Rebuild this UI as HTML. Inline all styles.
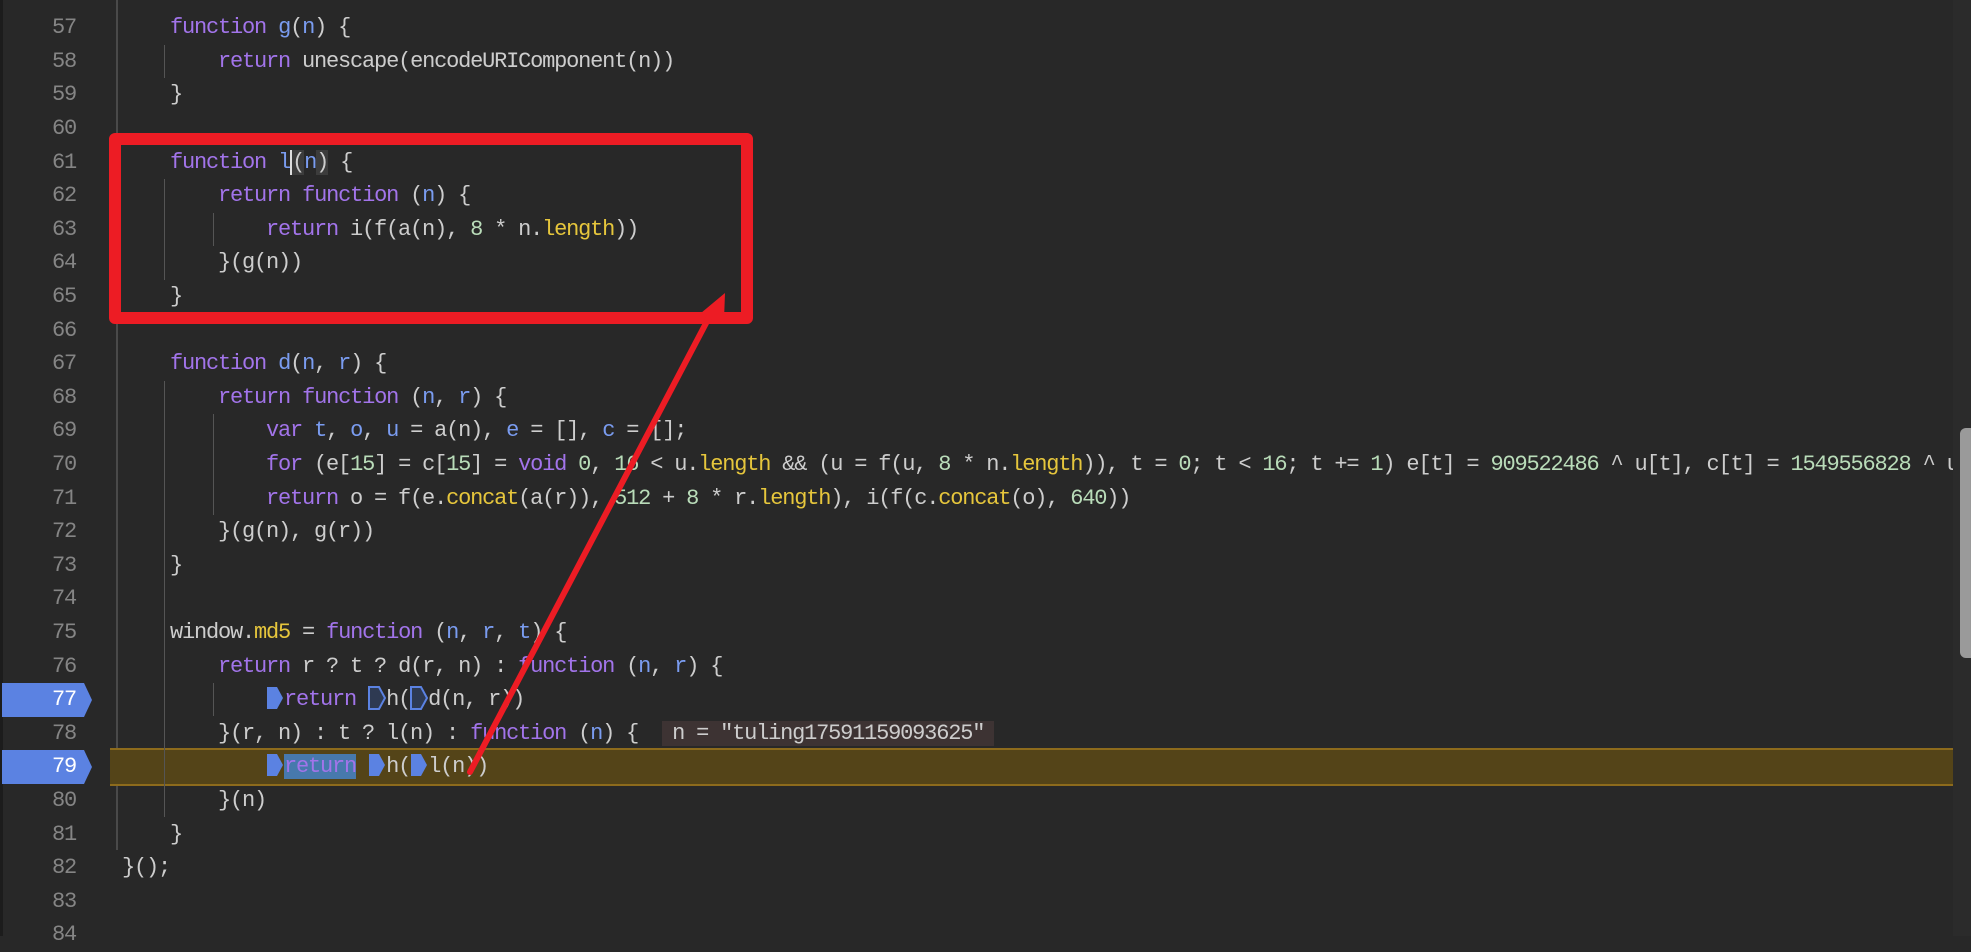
<!DOCTYPE html>
<html><head><meta charset="utf-8"><style>
html,body{margin:0;padding:0;}
body{width:1971px;height:936px;background:#282828;position:relative;overflow:hidden;font-family:"Liberation Mono",monospace;font-size:22px;letter-spacing:-1.2px;color:#cdcdcd;}
.ln{position:absolute;left:0;width:76px;text-align:right;color:#858585;height:34px;line-height:34px;}
.c{position:absolute;left:122px;height:34px;line-height:34px;white-space:pre;}
.k{color:#a274ea}.p{color:#7a9cf0}.n{color:#b9dcb9}.y{color:#e6c63c}
.bp{position:absolute;left:2px;width:90px;height:34px;}
.m{display:inline-block;width:18px;height:24px;vertical-align:-5px;}
</style></head><body>
<div style="position:absolute;left:0;top:0;width:3px;height:936px;background:#1c1c1c"></div>
<div style="position:absolute;left:116px;top:0;width:2px;height:850px;background:#4a4a4a"></div>
<div style="position:absolute;left:1953px;top:0;width:18px;height:936px;background:#2b2b2b"></div>
<div style="position:absolute;left:1960px;top:428px;width:11px;height:230px;background:#9a9a9a;border-radius:6px 0 0 6px"></div>

<div style="position:absolute;left:110px;top:748px;width:1843px;height:34px;background:#544418;border-top:2px solid #8d6b1c;border-bottom:2px solid #8d6b1c"></div>

<div style="position:absolute;left:164px;top:45px;width:1px;height:33px;background:#555"></div>
<div style="position:absolute;left:164px;top:179px;width:1px;height:101px;background:#555"></div>
<div style="position:absolute;left:213px;top:213px;width:1px;height:33px;background:#555"></div>
<div style="position:absolute;left:164px;top:381px;width:1px;height:168px;background:#555"></div>
<div style="position:absolute;left:213px;top:414px;width:1px;height:101px;background:#555"></div>
<div style="position:absolute;left:164px;top:515px;width:1px;height:302px;background:#555"></div>
<div style="position:absolute;left:213px;top:683px;width:1px;height:33px;background:#555"></div>

<svg class="bp" style="top:683px" viewBox="0 0 90 34"><polygon points="0,0 82,0 90,17 82,34 0,34" fill="#5b82e2"/></svg>
<svg class="bp" style="top:750px" viewBox="0 0 90 34"><polygon points="0,0 82,0 90,17 82,34 0,34" fill="#5b82e2"/></svg>

<div class="ln" style="top:-23px">56</div>
<div class="ln" style="top:11px">57</div>
<div class="ln" style="top:45px">58</div>
<div class="ln" style="top:78px">59</div>
<div class="ln" style="top:112px">60</div>
<div class="ln" style="top:146px">61</div>
<div class="ln" style="top:179px">62</div>
<div class="ln" style="top:213px">63</div>
<div class="ln" style="top:246px">64</div>
<div class="ln" style="top:280px">65</div>
<div class="ln" style="top:314px">66</div>
<div class="ln" style="top:347px">67</div>
<div class="ln" style="top:381px">68</div>
<div class="ln" style="top:414px">69</div>
<div class="ln" style="top:448px">70</div>
<div class="ln" style="top:482px">71</div>
<div class="ln" style="top:515px">72</div>
<div class="ln" style="top:549px">73</div>
<div class="ln" style="top:582px">74</div>
<div class="ln" style="top:616px">75</div>
<div class="ln" style="top:650px">76</div>
<div class="ln" style="top:683px;color:#fff">77</div>
<div class="ln" style="top:717px">78</div>
<div class="ln" style="top:750px;color:#fff">79</div>
<div class="ln" style="top:784px">80</div>
<div class="ln" style="top:818px">81</div>
<div class="ln" style="top:851px">82</div>
<div class="ln" style="top:885px">83</div>
<div class="ln" style="top:918px">84</div>

<div class="c" style="top:11px">    <span class="k">function</span> <span class="p">g</span>(<span class="p">n</span>) {</div>
<div class="c" style="top:45px">        <span class="k">return</span> unescape(encodeURIComponent(n))</div>
<div class="c" style="top:78px">    }</div>
<div class="c" style="top:146px">    <span class="k">function</span> <span class="p">l</span><span style="background:#3c3c3c;border-left:2px solid #ddd">(</span><span class="p">n</span><span style="background:#3c3c3c">)</span> {</div>
<div class="c" style="top:179px">        <span class="k">return</span> <span class="k">function</span> (<span class="p">n</span>) {</div>
<div class="c" style="top:213px">            <span class="k">return</span> i(f(a(n), <span class="n">8</span> * n.<span class="y">length</span>))</div>
<div class="c" style="top:246px">        }(g(n))</div>
<div class="c" style="top:280px">    }</div>
<div class="c" style="top:347px">    <span class="k">function</span> <span class="p">d</span>(<span class="p">n</span>, <span class="p">r</span>) {</div>
<div class="c" style="top:381px">        <span class="k">return</span> <span class="k">function</span> (<span class="p">n</span>, <span class="p">r</span>) {</div>
<div class="c" style="top:414px">            <span class="k">var</span> <span class="p">t</span>, <span class="p">o</span>, <span class="p">u</span> = a(n), <span class="p">e</span> = [], <span class="p">c</span> = [];</div>
<div class="c" style="top:448px;width:1831px;overflow:hidden">            <span class="k">for</span> (e[<span class="n">15</span>] = c[<span class="n">15</span>] = <span class="k">void</span> <span class="n">0</span>, <span class="n">16</span> &lt; u.<span class="y">length</span> &amp;&amp; (u = f(u, <span class="n">8</span> * n.<span class="y">length</span>)), t = <span class="n">0</span>; t &lt; <span class="n">16</span>; t += <span class="n">1</span>) e[t] = <span class="n">909522486</span> ^ u[t], c[t] = <span class="n">1549556828</span> ^ u[t]</div>
<div class="c" style="top:482px">            <span class="k">return</span> o = f(e.<span class="y">concat</span>(a(r)), <span class="n">512</span> + <span class="n">8</span> * r.<span class="y">length</span>), i(f(c.<span class="y">concat</span>(o), <span class="n">640</span>))</div>
<div class="c" style="top:515px">        }(g(n), g(r))</div>
<div class="c" style="top:549px">    }</div>
<div class="c" style="top:616px">    window.<span class="y">md5</span> = <span class="k">function</span> (<span class="p">n</span>, <span class="p">r</span>, <span class="p">t</span>) {</div>
<div class="c" style="top:650px">        <span class="k">return</span> r ? t ? d(r, n) : <span class="k">function</span> (<span class="p">n</span>, <span class="p">r</span>) {</div>
<div class="c" style="top:683px">            <svg class="m" viewBox="0 0 18 24"><polygon points="1,1 11,1 17,12 11,23 1,23" fill="#5b82e2"/></svg><span class="k">return</span> <svg class="m" viewBox="0 0 18 24"><polygon points="1,1 11,1 17,12 11,23 1,23" fill="#2e3a52" stroke="#5b82e2" stroke-width="2"/></svg>h(<svg class="m" viewBox="0 0 18 24"><polygon points="1,1 11,1 17,12 11,23 1,23" fill="#2e3a52" stroke="#5b82e2" stroke-width="2"/></svg>d(n, r))</div>
<div class="c" style="top:717px">        }(r, n) : t ? l(n) : <span class="k">function</span> (<span class="p">n</span>) {  <span style="background:#3d3333;padding:0 10px">n = "tuling17591159093625"</span></div>
<div class="c" style="top:750px">            <svg class="m" viewBox="0 0 18 24"><polygon points="1,1 11,1 17,12 11,23 1,23" fill="#5b82e2"/></svg><span class="k" style="background:#4779ad">return</span> <svg class="m" viewBox="0 0 18 24"><polygon points="1,1 11,1 17,12 11,23 1,23" fill="#5b82e2"/></svg>h(<svg class="m" viewBox="0 0 18 24"><polygon points="1,1 11,1 17,12 11,23 1,23" fill="#5b82e2"/></svg>l(n))</div>
<div class="c" style="top:784px">        }(n)</div>
<div class="c" style="top:818px">    }</div>
<div class="c" style="top:851px">}();</div>

<div style="position:absolute;left:109px;top:133px;width:620px;height:167px;border:12px solid #ed1c24;border-radius:6px"></div>
<svg style="position:absolute;left:0;top:0" width="1971" height="936">
<line x1="470" y1="772" x2="714" y2="308" stroke="#ed1c24" stroke-width="6" stroke-linecap="round"/>
<polygon points="725,293 724,320 701,313" fill="#ed1c24"/>
</svg>
</body></html>
